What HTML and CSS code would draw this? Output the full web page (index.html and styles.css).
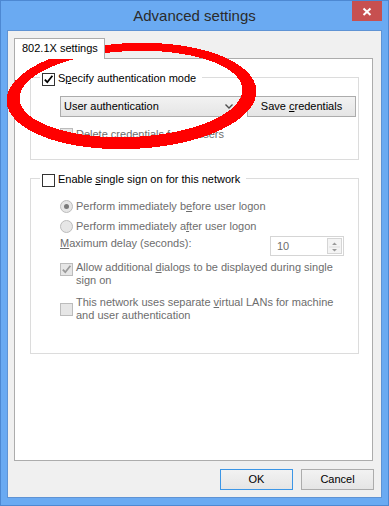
FILE: index.html
```html
<!doctype html>
<html lang="en">
  <head>
    <meta charset="UTF-8" />
    <title>Advanced settings</title>
    <link rel="stylesheet" href="styles.css">
  </head>
  <body>
    <div class="window">
      <!-- Title bar -->
      <div class="titlebar">
        <div class="title">Advanced settings</div>
        <div class="close">
          <svg width="30" height="20" viewBox="0 0 30 20">
            <path d="M11.5 7.5 L18.5 14 M18.5 7.5 L11.5 14" stroke="#fff" stroke-width="2" />
          </svg>
        </div>
      </div>

      <div class="client">
        <div class="tabs">
          <div class="tab">802.1X settings</div>
        </div>

        <div class="panel">
          <!-- Authentication mode -->
          <fieldset class="group group-auth">
            <legend>
              <label class="check">
                <span class="box checked">
                  <svg width="11" height="11" viewBox="0 0 11 11"><path d="M1.8 5.6 L4.3 8.2 L9.4 1.8" /></svg>
                </span>
                <span>S<u>p</u>ecify authentication mode</span>
              </label>
            </legend>
            <div class="mode-row">
              <div class="combo">
                <span>User authentication</span>
                <svg width="8" height="5" viewBox="0 0 8 5"><path d="M0.5 0.5 L4 4 L7.5 0.5" /></svg>
              </div>
              <div class="btn save">Save <u>c</u>redentials</div>
            </div>
            <label class="check disabled delete-row">
              <span class="box"></span>
              <span>Delete credentials for all users</span>
            </label>
          </fieldset>

          <!-- Single sign on -->
          <fieldset class="group group-sso">
            <legend>
              <label class="check">
                <span class="box"></span>
                <span>Enable <u>s</u>ingle sign on for this network</span>
              </label>
            </legend>
            <label class="radio disabled first">
              <span class="dot checked"></span>
              <span>Perform immediately b<u>e</u>fore user logon</span>
            </label>
            <label class="radio disabled">
              <span class="dot"></span>
              <span>Perform immediately a<u>f</u>ter user logon</span>
            </label>
            <div class="delay-row disabled">
              <span class="delay-label"><u>M</u>aximum delay (seconds):</span>
              <div class="spin">
                <span class="spin-value">10</span>
                <div class="spin-buttons">
                  <svg width="13" height="16" viewBox="0 0 13 16">
                    <path d="M4 6 L6.5 3.5 L9 6 Z M4 10 L9 10 L6.5 12.5 Z" fill="#9a9a9a" />
                    <path d="M1 8 H12" stroke="#dedede" />
                  </svg>
                </div>
              </div>
            </div>
            <label class="check disabled multi allow-row">
              <span class="box checked">
                <svg width="11" height="11" viewBox="0 0 11 11"><path d="M1.8 5.6 L4.3 8.2 L9.4 1.8" /></svg>
              </span>
              <span>Allow additional <u>d</u>ialogs to be displayed during single<br>sign on</span>
            </label>
            <label class="check disabled multi centered vlan-row">
              <span class="box"></span>
              <span>This network uses separate <u>v</u>irtual LANs for machine<br>and user authentication</span>
            </label>
          </fieldset>
        </div>

        <div class="actions">
          <div class="btn default">OK</div>
          <div class="btn">Cancel</div>
        </div>
      </div>

      <!-- Red annotation drawn over the dialog -->
      <svg class="annotation" width="389" height="506" viewBox="0 0 389 506">
        <path fill="#ff0000" fill-rule="evenodd" shape-rendering="crispEdges" transform="rotate(-2.5 131 96)"
          d="M6.5 96 A125 53 0 1 0 256.5 96 A125 53 0 1 0 6.5 96 Z
             M19.5 94 A111.5 43 0 1 1 242.5 94 A111.5 43 0 1 1 19.5 94 Z" />
      </svg>
    </div>
  </body>
</html>
```

FILE: styles.css
```css
/* Windows 8 dialog palette */
:root {
  --frame: #6aaaf2;
  --frame-edge: #4d88d2;
  --face: #f0f0f0;
  --tab-border: #acacac;
  --group-border: #dcdcdc;
  --disabled: #6d6d6d;
}

body {
  margin: 0;
  font-family: "Segoe UI", "Liberation Sans", Arial, sans-serif;
  font-size: 11px;
  color: #000;
  background: #fff;
}

u {
  text-decoration-thickness: 1px;
  text-underline-offset: 1px;
}

/* Window frame */
.window {
  position: relative;
  width: 389px;
  height: 506px;
  box-sizing: border-box;
  border: 1px solid var(--frame-edge);
  background: var(--frame);
  display: flex;
  flex-direction: column;
}

.titlebar {
  height: 29px;
  display: flex;
  align-items: flex-start;
  flex-shrink: 0;
}

.title {
  flex: 1;
  padding-left: 36px;
  text-align: center;
  font-size: 15px;
  line-height: 29px;
  color: #2b2b2b;
}

.close {
  width: 30px;
  height: 20px;
  margin-right: 6px;
  background: #c75050;
}

.close svg {
  display: block;
}

/* Client area */
.client {
  flex: 1;
  margin: 0 6px 7px 6px;
  padding: 7px 7px 7px 6px;
  border: 1px solid #5f93d4;
  background: var(--face);
  display: flex;
  flex-direction: column;
}

.tabs {
  display: flex;
}

.tab {
  position: relative;
  z-index: 1;
  box-sizing: border-box;
  width: 91px;
  height: 21px;
  margin-bottom: -1px;
  padding-left: 7px;
  border: 1px solid var(--tab-border);
  border-bottom: none;
  background: #fff;
  line-height: 19px;
}

.panel {
  flex: 1;
  margin-right: 1px;
  border: 1px solid var(--tab-border);
  background: #fff;
}

/* Group boxes */
.group {
  margin: 11px 13px 0 15px;
  padding: 0 0 0 9px;
  border: 1px solid var(--group-border);
  min-width: 0;
}

.group-auth {
  padding-bottom: 17px;
}

.group-sso {
  padding-bottom: 31px;
}

legend {
  padding: 0 6px 0 2px;
  height: 15px;
  line-height: 15px;
}

/* Check boxes and radios */
.check,
.radio {
  display: flex;
  align-items: center;
  gap: 3px;
  line-height: 15px;
}

.check.multi {
  align-items: flex-start;
  line-height: 13px;
}

.check.multi .box {
  margin-top: 2px;
}

.check.multi.centered {
  align-items: center;
}

.check.multi.centered .box {
  margin-top: 0;
}

legend .box {
  margin-top: 3px;
  align-self: flex-start;
}

.box {
  flex-shrink: 0;
  box-sizing: border-box;
  width: 13px;
  height: 13px;
  border: 1px solid #333;
  background: #fff;
}

.box svg {
  display: block;
}

.box svg path {
  fill: none;
  stroke: #000;
  stroke-width: 1.8;
}

.disabled {
  color: var(--disabled);
}

.disabled .box {
  border-color: #bcbcbc;
  background: #e6e6e6;
}

.disabled .box svg path {
  stroke: #9a9a9a;
}

.dot {
  flex-shrink: 0;
  box-sizing: border-box;
  width: 13px;
  height: 13px;
  border: 1px solid #bcbcbc;
  border-radius: 50%;
  background: #e6e6e6;
  display: flex;
  align-items: center;
  justify-content: center;
}

.dot.checked::after {
  content: "";
  width: 5px;
  height: 5px;
  border-radius: 50%;
  background: #7a7a7a;
}

/* Rows inside the groups */
.mode-row {
  display: flex;
  gap: 6px;
  margin: 11px 0 0 20px;
}

.delete-row {
  margin: 10px 0 0 20px;
}

.radio {
  margin: 5px 0 0 20px;
}

.radio.first {
  margin-top: 13px;
}

.delay-row {
  display: flex;
  justify-content: space-between;
  margin: 2px 14px 0 20px;
}

.delay-label {
  line-height: 15px;
}

.allow-row {
  margin: 5px 0 0 20px;
}

.vlan-row {
  margin: 9px 0 0 20px;
}

/* Combo box and buttons */
.combo {
  box-sizing: border-box;
  width: 181px;
  height: 21px;
  padding: 0 7px 0 3px;
  border: 1px solid var(--tab-border);
  background: linear-gradient(#f2f2f2, #e5e5e5);
  display: flex;
  align-items: center;
  justify-content: space-between;
  line-height: 19px;
}

.combo svg path {
  fill: none;
  stroke: #4d4d4d;
  stroke-width: 1.4;
}

.btn {
  box-sizing: border-box;
  width: 73px;
  height: 21px;
  border: 1px solid var(--tab-border);
  background: linear-gradient(#f2f2f2, #e5e5e5);
  text-align: center;
  line-height: 19px;
}

.btn.save {
  width: 109px;
}

.btn.default {
  border-color: #3c96e6;
}

.spin {
  box-sizing: border-box;
  width: 74px;
  height: 20px;
  border: 1px solid #d5d5d5;
  background: #fff;
  display: flex;
  justify-content: space-between;
}

.spin-value {
  padding-left: 6px;
  line-height: 18px;
}

.spin-buttons {
  width: 15px;
  margin: 1px;
  box-sizing: border-box;
  border: 1px solid #d5d5d5;
  background: #f4f4f4;
}

.spin-buttons svg {
  display: block;
}

/* Footer buttons */
.actions {
  display: flex;
  justify-content: flex-end;
  gap: 8px;
  margin-top: 8px;
}

/* Hand-drawn annotation */
.annotation {
  position: absolute;
  top: -1px;
  left: -1px;
  pointer-events: none;
}
```
